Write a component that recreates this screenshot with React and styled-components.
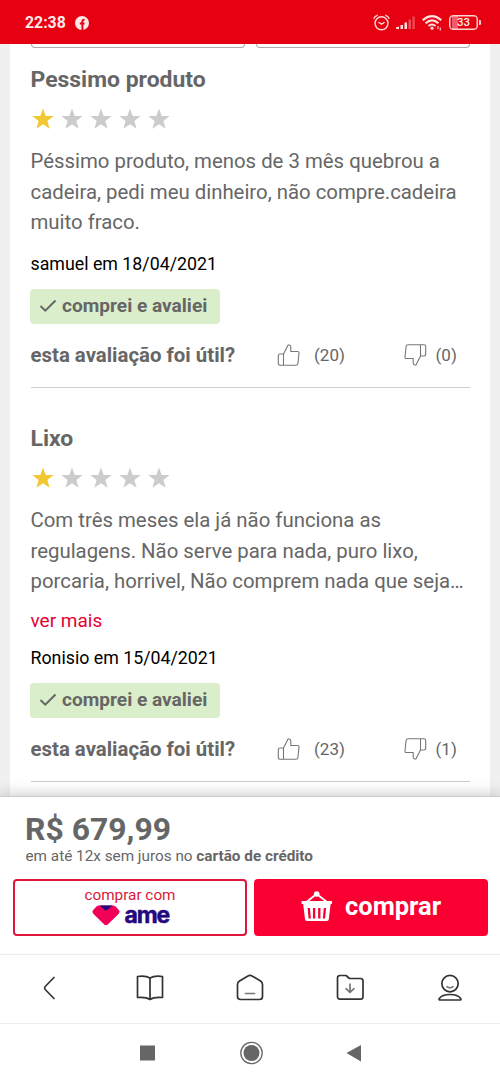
import React from 'react';
import styled, { createGlobalStyle } from 'styled-components';

const Global = createGlobalStyle`
  *, *::before, *::after { box-sizing: border-box; }
  body { margin: 0; background: #fff; font-family: Roboto, "Liberation Sans", sans-serif; color: #666; }
  p, h2 { margin: 0; }
  svg { display: block; flex: none; }
  button { font: inherit; margin: 0; padding: 0; border: 0; background: none; }
`;

const Screen = styled.div`
  width: 500px;
  height: 1083px;
  display: flex;
  flex-direction: column;
  overflow: hidden;
  background: #fff;
`;

const StatusBar = styled.header`
  height: 44px;
  flex: none;
  display: flex;
  align-items: center;
  justify-content: space-between;
  padding: 1px 19px 0 25px;
  background: #e60012;
  color: #ffe9e6;
`;

const Clock = styled.div`
  display: flex;
  align-items: center;
  gap: 9px;
  font-size: 15.8px;
  font-weight: 700;
`;

const StatusIcons = styled.div`
  display: flex;
  align-items: center;
`;

const Content = styled.main`
  height: 752px;
  flex: none;
  padding: 0 10px;
  overflow: hidden;
  background: #f0f0f0;
`;

const Card = styled.section`
  height: 752px;
  padding: 0 20px 0 20.5px;
  background: #fff;
`;

const Filters = styled.div`
  display: grid;
  grid-template-columns: 214px 214px;
  justify-content: space-between;
`;

const Filter = styled.div`
  height: 3.5px;
  border: 1px solid #aaa;
  border-top: 0;
  border-radius: 0 0 4px 4px;
`;

const Review = styled.article`
  height: ${(p) => p.$height}px;
  padding-top: ${(p) => p.$top}px;
  border-bottom: 1px solid #ccc;
`;

const Title = styled.h2`
  height: 30px;
  font-size: 22.95px;
  line-height: 30px;
  font-weight: 700;
`;

const Stars = styled.div`
  display: flex;
  gap: 5px;
  height: 24px;
  margin: 12px 0 15px 0.5px;
`;

const Body = styled.p`
  font-size: 20.37px;
  line-height: 30.5px;
  white-space: pre;
`;

const More = styled.a`
  display: block;
  margin-top: 12px;
  font-size: 19px;
  line-height: 24px;
  color: #e60033;
`;

const Author = styled.p`
  margin-top: ${(p) => p.$gap}px;
  font-size: 17.8px;
  line-height: 24px;
  color: #000;
`;

const Badge = styled.div`
  display: flex;
  align-items: center;
  width: 190px;
  height: 35px;
  margin: 13.7px 0 0 -0.5px;
  padding: 0 0 2px 8.5px;
  gap: 5.5px;
  border-radius: 4px;
  background: #daeecb;
  font-size: 19.1px;
  font-weight: 700;
`;

const Useful = styled.div`
  display: grid;
  grid-template-columns: 246.5px 37px 89px 32.5px 1fr;
  align-items: center;
  height: 24px;
  margin-top: 19px;
`;

const Question = styled.span`
  font-size: 20.4px;
  line-height: 24px;
  font-weight: 700;
  white-space: nowrap;
`;

const Count = styled.span`
  font-size: 17px;
`;

const Purchase = styled.section`
  position: relative;
  height: 158px;
  flex: none;
  padding: 17px 12.5px 0 13px;
  background: #fff;
  border-top: 1px solid #ccc;
  box-shadow: 0 -2px 14px rgba(0, 0, 0, 0.2);
`;

const Price = styled.p`
  padding-left: 12px;
  font-size: 31.9px;
  line-height: 31px;
  font-weight: 700;
`;

const Installments = styled.p`
  padding-left: 12.5px;
  font-size: 15.3px;
  line-height: 22px;
`;

const Actions = styled.div`
  display: grid;
  grid-template-columns: 234px 234px;
  justify-content: space-between;
  margin-top: 11.5px;
`;

const AmeButton = styled.button`
  height: 57px;
  display: flex;
  flex-direction: column;
  align-items: center;
  border: 2px solid #e0143c;
  border-radius: 4px;
  color: #d9173a;
  font-size: 15.3px;
  line-height: 18px;
  padding-top: 5px;
`;

const AmeLogo = styled.span`
  display: flex;
  align-items: center;
  gap: 5px;
  height: 22px;
  margin-top: 1px;
`;

const AmeWord = styled.span`
  width: 44px;
  padding-bottom: 2px;
  color: #24087f;
  font-family: Inter, Roboto, sans-serif;
  font-size: 23px;
  line-height: 20px;
  font-weight: 700;
  letter-spacing: -1.2px;
  -webkit-text-stroke: 0.5px #24087f;
`;

const BuyButton = styled.button`
  height: 57px;
  display: flex;
  align-items: center;
  padding: 0 0 3px 47px;
  gap: 12.5px;
  border-radius: 4px;
  background: #fa0032;
  color: #fff;
  font-size: 25.5px;
  font-weight: 700;
`;

const BrowserNav = styled.nav`
  position: relative;
  height: 69px;
  flex: none;
  display: grid;
  grid-template-columns: repeat(5, 100px);
  place-items: center;
  padding-bottom: 2px;
  background: #fff;
  border-top: 1px solid #ebebeb;
`;

const SystemNav = styled.nav`
  position: relative;
  height: 60px;
  flex: none;
  display: grid;
  grid-template-columns: 104px 104px 102px;
  justify-content: center;
  place-items: center;
  padding-bottom: 2px;
  background: #fff;
  border-top: 1px solid #ececec;
`;

const Star = ({ on }) => (
  <svg width="24" height="24" viewBox="0 0 24 24" fill={on ? '#f2c832' : '#ccc'}>
    <path d="M12 1.500l2.700 7.400 8 .2-6.300 4.800 2.200 7.900L12 17.300l-6.600 4.500 2.200-7.900L1.300 9.100l8-.200z" />
  </svg>
);

const Thumb = ({ down }) => (
  <svg width="24" height="24" viewBox="0 0 24 24" fill="none" stroke="#777" strokeWidth="1.1" strokeLinejoin="round">
    <g transform={down ? 'rotate(180 12 12)' : undefined}>
      <path d="M6.500 11L10.300 3.500C10.600 1.200 13.800 1.400 13.800 4.200V8.500H20.500Q22.200 8.500 22 10L20.900 20.500Q20.700 22.300 19 22.300H6.500Z" />
      <path d="M6.500 11H3Q1.300 11 1.300 12.700V20.600Q1.300 22.300 3 22.300H6.500" />
    </g>
  </svg>
);

const Check = () => (
  <svg width="18" height="16" viewBox="0 0 18 16" fill="none" stroke="#666" strokeWidth="2">
    <path d="M1.500 8l4.800 4.700L16.500 2.500" />
  </svg>
);

const Facebook = () => (
  <svg width="14" height="14" viewBox="0 0 14 14">
    <circle cx="7" cy="7" r="7" fill="#ffe9e6" />
    <path d="M7.400 14V5.500Q7.400 3.500 9.600 3.700M4.800 7.500H9.500" fill="none" stroke="#e60012" strokeWidth="1.900" />
  </svg>
);

const Alarm = () => (
  <svg width="17" height="17" viewBox="0 0 17 17" fill="none" stroke="#ffd9d6" strokeWidth="1.400" strokeLinecap="round">
    <circle cx="8.500" cy="9.300" r="6.500" />
    <path d="M1 4.300Q2 2 4.300 1.300M16 4.300Q15 2 12.700 1.300M5.900 8.500l2.600 1.700 2.600-1.700" />
  </svg>
);

const Signal = () => (
  <svg width="19" height="14" viewBox="0 0 19 14" fill="#ffe0dd">
    <path d="M0 11.500L3 10.500V13H0zM4.500 9h2.500v4H4.500zM8.500 6.500H11V13H8.500z" />
    <path d="M12.500 3.500H15V13h-2.500zM16.500 .500H18.700V13H16.500z" opacity=".35" />
  </svg>
);

const Wifi = () => (
  <svg width="20" height="16" viewBox="0 0 20 16" fill="none" stroke="#ffdfdc" strokeWidth="2.100">
    <path d="M.700 5.200Q10-2.800 19.300 5.200M3.500 8.200Q10 2.500 16.500 8.200M6.500 11Q10 8 13.500 11" />
    <circle cx="10" cy="13.200" r="1.600" fill="#ffdfdc" stroke="none" />
    <path d="M15.900 11v3M18.300 12.500V15.500" strokeWidth="1.300" opacity=".8" />
  </svg>
);

const Battery = styled.div`
  width: 29px;
  height: 15px;
  border: 1px solid #ffd3d0;
  box-shadow: inset 0 0 0 0.5px #ffd3d0;
  border-radius: 4px;
  background: linear-gradient(90deg, transparent 2px, #f45a69 2px, #f45a69 8px, transparent 8px);
  color: #ffe9e6;
  font-size: 11.5px;
  line-height: 13.5px;
  font-weight: 500;
  text-align: center;
`;

const BatteryTip = styled.i`
  width: 2px;
  height: 5px;
  margin-left: 1px;
  border-radius: 0 1px 1px 0;
  background: #ffd3d0;
`;

const Gap = styled.i`
  width: ${(p) => p.$w}px;
`;

const AmeHeart = () => (
  <svg width="28" height="21" viewBox="0 0 28 21">
    <path d="M7 .500H21Q22.500 .500 23.500 1.500L26.800 5Q28.500 7 26.500 9L16 19.200Q14 21 12 19.200L1.500 9Q-.500 7 1.200 5L4.500 1.500Q5.500 .500 7 .500Z" fill="#f20058" />
    <path d="M7.500 .500H20.500L15.500 4.800Q14 6 12.500 4.800Z" fill="#24087f" />
  </svg>
);

const Basket = () => (
  <svg width="32" height="30" viewBox="0 0 32 30">
    <path d="M5.500 11L15.500 3L26 11" fill="none" stroke="#fff" strokeWidth="1.800" />
    <circle cx="15.700" cy="3" r="2.800" fill="#fff" />
    <path d="M1.200 10H30.300Q31 10 31 10.700V12.300Q31 13 30.300 13H29.600L27.800 28.300Q27.600 30 26 30H6Q4.200 30 4 28.300L2.200 13H1.200Q.500 13 .500 12.300V10.700Q.500 10 1.200 10Z" fill="#fff" />
    <path d="M7.800 17l.900 10.500M13.100 17V27.500M18.300 17V27.500M23.900 17l-.900 10.500" stroke="#fa0032" strokeWidth="2.300" />
  </svg>
);

const NavIcon = ({ children }) => (
  <svg width="30" height="30" viewBox="0 0 30 30" fill="none" stroke="#333" strokeWidth="1.700" strokeLinecap="round" strokeLinejoin="round">
    {children}
  </svg>
);

const Helpful = ({ up, down }) => (
  <Useful>
    <Question>esta avaliação foi útil?</Question>
    <Thumb />
    <Count>({up})</Count>
    <Thumb down />
    <Count>({down})</Count>
  </Useful>
);

const ReviewItem = ({ height, top, title, lines, more, author, up, down }) => (
  <Review $height={height} $top={top}>
    <Title>{title}</Title>
    <Stars>{[0, 1, 2, 3, 4].map((n) => <Star key={n} on={n === 0} />)}</Stars>
    <Body>{lines.join('\n')}</Body>
    {more && <More>ver mais</More>}
    <Author $gap={more ? 13 : 14}>{author}</Author>
    <Badge><Check />comprei e avaliei</Badge>
    <Helpful up={up} down={down} />
  </Review>
);

export default function App() {
  return (
    <>
      <Global />
      <Screen>
        <StatusBar>
          <Clock>22:38<Facebook /></Clock>
          <StatusIcons>
            <Alarm /><Gap $w={6} /><Signal /><Gap $w={7} /><Wifi /><Gap $w={7} />
            <Battery>33</Battery><BatteryTip />
          </StatusIcons>
        </StatusBar>
        <Content>
          <Card>
            <Filters><Filter /><Filter /></Filters>
            <ReviewItem
              height={340.5} top={17.5} title="Pessimo produto" up={20} down={0}
              lines={['Péssimo produto, menos de 3 mês quebrou a', 'cadeira, pedi meu dinheiro, não compre.cadeira', 'muito fraco.']}
              author="samuel em 18/04/2021"
            />
            <ReviewItem
              height={394} top={36} title="Lixo" up={23} down={1} more
              lines={['Com três meses ela já não funciona as', 'regulagens. Não serve para nada, puro lixo,', 'porcaria, horrivel, Não comprem nada que seja…']}
              author="Ronisio em 15/04/2021"
            />
          </Card>
        </Content>
        <Purchase>
          <Price>R$ 679,99</Price>
          <Installments>em até 12x sem juros no <b>cartão de crédito</b></Installments>
          <Actions>
            <AmeButton>
              comprar com
              <AmeLogo><AmeHeart /><AmeWord>ame</AmeWord></AmeLogo>
            </AmeButton>
            <BuyButton><Basket />comprar</BuyButton>
          </Actions>
        </Purchase>
        <BrowserNav>
          <NavIcon><path d="M19 4.500L10.200 13.500Q9 15 10.200 16.500L19 25.500" /></NavIcon>
          <NavIcon><path d="M15 5Q11 2.500 2.500 3.500V24.500Q11 23.800 15 26.500Q19 23.800 27.500 24.500V3.500Q19 2.500 15 5V26.500" /></NavIcon>
          <NavIcon>
            <path d="M12.500 3.200Q15 1.700 17.500 3.200L25.500 8Q27.500 9.300 27.500 11.500V23.500Q27.500 26.500 24.500 26.500H5.500Q2.500 26.500 2.500 23.500V11.500Q2.500 9.300 4.500 8Z" />
            <path d="M10.500 20.500H19.500" stroke="#777" />
          </NavIcon>
          <NavIcon>
            <path d="M2.500 5Q2.500 2.500 5 2.500H11L14.500 5.500H25.500Q28 5.500 28 8V23.500Q28 26.200 25.500 26.200H5Q2.500 26.200 2.500 23.500Z" />
            <path d="M15 11V19M11 15.700L15 19.300L19 15.700" stroke="#777" />
          </NavIcon>
          <NavIcon>
            <circle cx="15" cy="10.600" r="8.200" />
            <path d="M12 13.700Q15 16 18 13.700" stroke="#777" />
            <path d="M4.500 27Q3.800 27 4.300 25.500Q7 21.500 15 21.500Q23 21.500 25.700 25.500Q26.200 27 25.500 27Z" />
          </NavIcon>
        </BrowserNav>
        <SystemNav>
          <svg width="24" height="24" viewBox="0 0 24 24"><rect x="5" y="4.500" width="15" height="15" fill="#666" /></svg>
          <svg width="24" height="24" viewBox="0 0 24 24"><circle cx="12.500" cy="12" r="10.700" fill="none" stroke="#666" strokeWidth="1.300" /><circle cx="12.500" cy="12" r="8" fill="#666" /></svg>
          <svg width="24" height="24" viewBox="0 0 24 24"><path d="M4.500 12L19 4V20.500Z" fill="#666" /></svg>
        </SystemNav>
      </Screen>
    </>
  );
}
